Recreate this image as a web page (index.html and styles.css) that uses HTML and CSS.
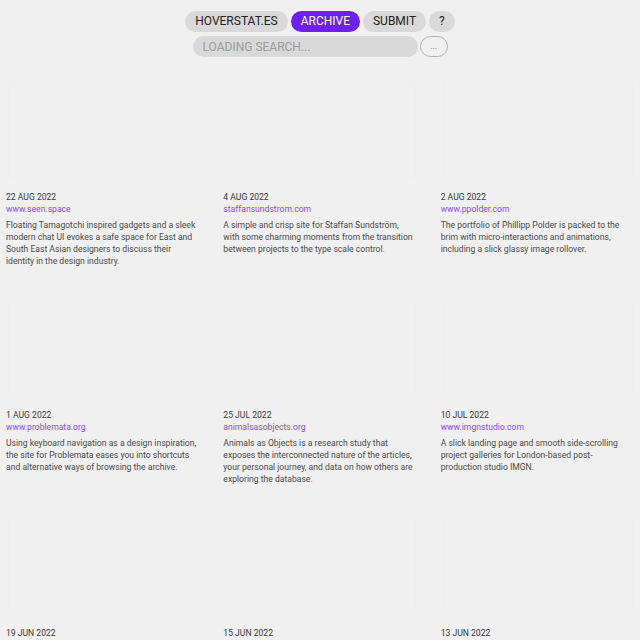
FILE: index.html
```html
<!DOCTYPE html>
<html lang="en">

<head>
    <meta charset="UTF-8">
    <meta name="viewport" content="width=device-width, initial-scale=1.0">
    <title>Hoverstat.es Archive</title>
    <link rel="stylesheet" href="styles.css">
</head>

<body>
    <header id="top">
        <nav id="menu">
            <a href="/" class="pill">Hoverstat.es</a>
            <a href="/archive" class="pill active">Archive</a>
            <a href="/submit" class="pill">Submit</a>
            <a href="/about" class="pill">?</a>
        </nav>
        <div id="search">
            <input id="search-input" type="text" placeholder="Loading search...">
            <button id="more">...</button>
        </div>
    </header>

    <section id="archive">
        <article class="card">
            <div class="thumb"></div>
            <div class="date">22 Aug 2022</div>
            <a class="link" href="#">www.seen.space</a>
            <p class="desc">Floating Tamagotchi inspired gadgets and a sleek modern chat UI evokes a safe space for East and South East Asian designers to discuss their identity in the design industry.</p>
        </article>
        <article class="card">
            <div class="thumb"></div>
            <div class="date">4 Aug 2022</div>
            <a class="link" href="#">staffansundstrom.com</a>
            <p class="desc">A simple and crisp site for Staffan Sundström, with some charming moments from the transition between projects to the type scale control.</p>
        </article>
        <article class="card">
            <div class="thumb"></div>
            <div class="date">2 Aug 2022</div>
            <a class="link" href="#">www.ppolder.com</a>
            <p class="desc">The portfolio of Phillipp Polder is packed to the brim with micro-interactions and animations, including a slick glassy image rollover.</p>
        </article>
        <article class="card">
            <div class="thumb"></div>
            <div class="date">1 Aug 2022</div>
            <a class="link" href="#">www.problemata.org</a>
            <p class="desc">Using keyboard navigation as a design inspiration, the site for Problemata eases you into shortcuts and alternative ways of browsing the archive.</p>
        </article>
        <article class="card">
            <div class="thumb"></div>
            <div class="date">25 Jul 2022</div>
            <a class="link" href="#">animalsasobjects.org</a>
            <p class="desc">Animals as Objects is a research study that exposes the interconnected nature of the articles, your personal journey, and data on how others are exploring the database.</p>
        </article>
        <article class="card">
            <div class="thumb"></div>
            <div class="date">10 Jul 2022</div>
            <a class="link" href="#">www.imgnstudio.com</a>
            <p class="desc">A slick landing page and smooth side-scrolling project galleries for London-based post-production studio IMGN.</p>
        </article>
        <article class="card">
            <div class="thumb"></div>
            <div class="date">19 Jun 2022</div>
        </article>
        <article class="card">
            <div class="thumb"></div>
            <div class="date">15 Jun 2022</div>
        </article>
        <article class="card">
            <div class="thumb"></div>
            <div class="date">13 Jun 2022</div>
        </article>
    </section>
</body>

</html>
```

FILE: styles.css
```css
body {
    margin: 0;
    background-color: #f0f0f0;
    font-family: Roboto, "Liberation Sans", sans-serif;
    color: #333;
}

#top {
    display: flex;
    flex-direction: column;
    align-items: center;
    gap: 4px;
    padding-top: 11px;
}

#menu {
    display: flex;
    gap: 3px;
}

.pill {
    display: block;
    height: 21px;
    line-height: 21px;
    padding: 0 10px;
    border-radius: 11px;
    background-color: #d9d9d9;
    color: #222;
    font-size: 12px;
    text-transform: uppercase;
    text-decoration: none;
}

.pill.active {
    background-color: #6e1ff0;
    color: white;
}

#search {
    display: flex;
    gap: 2px;
}

#search-input {
    width: 225px;
    height: 21px;
    box-sizing: border-box;
    border: none;
    border-radius: 11px;
    background-color: #d9d9d9;
    padding: 0 10px;
    font-family: inherit;
    font-size: 12px;
    text-transform: uppercase;
    outline: none;
}

#search-input::placeholder {
    color: #9a9a9a;
}

#more {
    width: 28px;
    height: 21px;
    padding: 0;
    border: 1px solid #b0b0b0;
    border-radius: 11px;
    background: transparent;
    color: #777;
    font-family: inherit;
    font-size: 9px;
    line-height: 17px;
}

#archive {
    display: grid;
    grid-template-columns: repeat(3, 1fr);
    grid-auto-rows: 218px;
    column-gap: 25px;
    padding: 24px 7px 0 6px;
}

.thumb {
    height: 97px;
    margin: 0 0 13px 2px;
    border: 1px solid #eeeeee;
    box-sizing: border-box;
}

.date {
    font-size: 8.6px;
    line-height: 12px;
    text-transform: uppercase;
    color: #3a3a3a;
}

.link {
    display: block;
    font-size: 8.6px;
    line-height: 12px;
    color: #8b4cf7;
    text-decoration: none;
}

.desc {
    margin: 4px 0 0;
    font-size: 8.6px;
    line-height: 12px;
    color: #4a4a4a;
}
```
